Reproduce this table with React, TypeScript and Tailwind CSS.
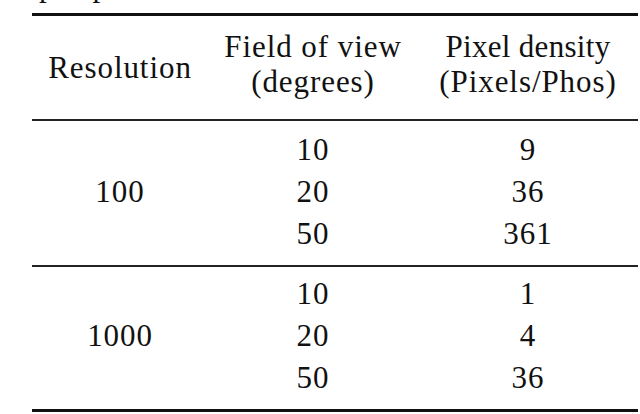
import React from "react";

interface Group {
  resolution: string;
  rows: [string, string][];
}

const groups: Group[] = [
  {
    resolution: "100",
    rows: [
      ["10", "9"],
      ["20", "36"],
      ["50", "361"],
    ],
  },
  {
    resolution: "1000",
    rows: [
      ["10", "1"],
      ["20", "4"],
      ["50", "36"],
    ],
  },
];

const App = () => {
  return (
    <div className="w-[640px] h-[414px] bg-white text-[#111] font-['Liberation_Serif'] text-[31px] tracking-[0.03em] overflow-hidden">
      {/* tail of the caption line above the table */}
      <div className="h-[13px] overflow-hidden">
        <div className="-mt-[30px] leading-[31px] whitespace-pre pl-[39px]">
          <span>p</span>
          <span className="pl-[37px]">p</span>
        </div>
      </div>

      <div className="ml-[32px] w-[606px]">
        <div className="h-[3px] bg-[#111]" />

        {/* header */}
        <div className="flex h-[103px]">
          <div className="w-[176px] flex items-center justify-center leading-[35px]">
            Resolution
          </div>
          <div className="w-[210px] pt-[13px] flex flex-col items-center leading-[35px]">
            <span>Field of view</span>
            <span>(degrees)</span>
          </div>
          <div className="w-[220px] pt-[13px] flex flex-col items-center leading-[35px]">
            <span className="tracking-[0.01em]">Pixel density</span>
            <span>(Pixels/Phos)</span>
          </div>
        </div>
        <div className="h-[2px] bg-[#222]" />

        {groups.map((group, gi) => (
          <div key={group.resolution}>
            <div className={`flex ${gi === 0 ? "pt-[8px]" : "pt-[6px]"} pb-[10px] leading-[42px]`}>
              <div className="w-[176px] flex items-center justify-center">
                {group.resolution}
              </div>
              <div className="w-[210px] flex flex-col items-center">
                {group.rows.map((r) => (
                  <span key={r[0]}>{r[0]}</span>
                ))}
              </div>
              <div className="w-[220px] flex flex-col items-center">
                {group.rows.map((r) => (
                  <span key={r[0]}>{r[1]}</span>
                ))}
              </div>
            </div>
            <div className={gi === groups.length - 1 ? "h-[3px] bg-[#111]" : "h-[2px] bg-[#222]"} />
          </div>
        ))}
      </div>
    </div>
  );
};

export default App;
